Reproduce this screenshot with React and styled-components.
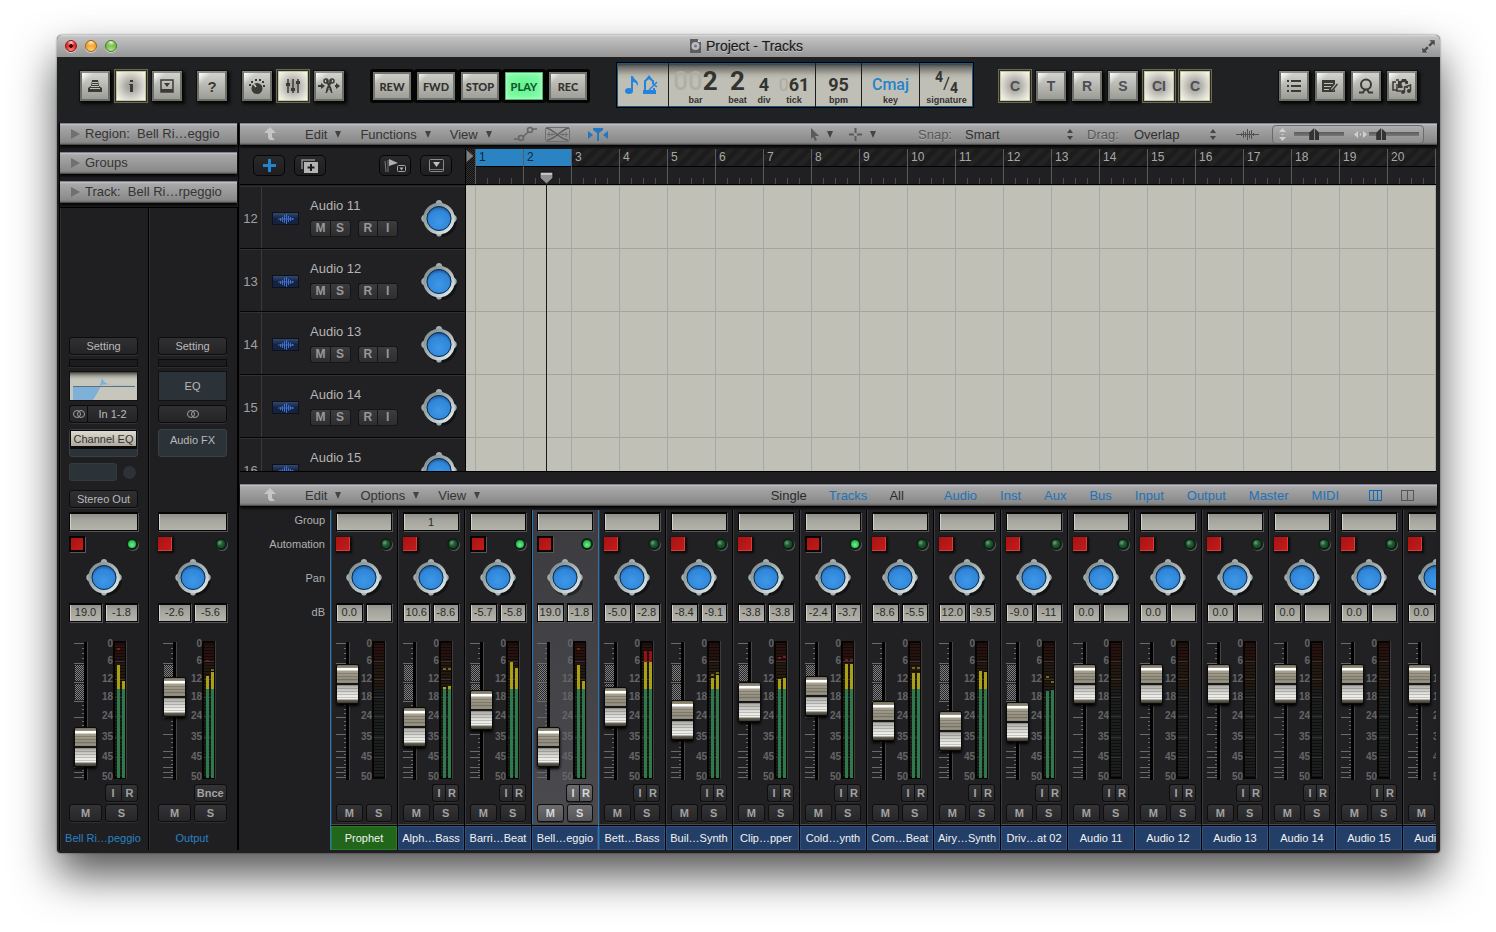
import React, { useState } from 'react';
import styled, { createGlobalStyle, css } from 'styled-components';

const sans = '"Liberation Sans", Arial, sans-serif';

const tracks = [
  { number: 12, name: 'Audio 11' },
  { number: 13, name: 'Audio 12' },
  { number: 14, name: 'Audio 13' },
  { number: 15, name: 'Audio 14' },
  { number: 16, name: 'Audio 15' },
];

// levels and peaks are in meter units, counted down from the top
const bellLevels = { levels: [24, 40], peaks: [7, null] };

const channels = [
  { name: 'Prophet', db: ['0.0', ''], fader: 76, instrument: true },
  { name: 'Alph…Bass', group: '1', db: ['10.6', '-8.6'], fader: 33, levels: [46, 45], peaks: [27, 27] },
  { name: 'Barri…Beat', db: ['-5.7', '-5.8'], fader: 50, auto: true, levels: [21, 27] },
  { name: 'Bell…eggio', db: ['19.0', '-1.8'], fader: 13, auto: true, selected: true, ...bellLevels },
  { name: 'Bett…Bass', db: ['-5.0', '-2.8'], fader: 53, levels: [10, 10] },
  { name: 'Buil…Synth', db: ['-8.4', '-9.1'], fader: 40, levels: [37, 34], peaks: [33, 31] },
  { name: 'Clip…pper', db: ['-3.8', '-3.8'], fader: 58, levels: [38, 37], peaks: [16, 15] },
  { name: 'Cold…ynth', db: ['-2.4', '-3.7'], fader: 64, auto: true, levels: [23, 23], peaks: [18, 18] },
  { name: 'Com…Beat', db: ['-8.6', '-5.5'], fader: 39, levels: [32, 32], peaks: [26, 26] },
  { name: 'Airy…Synth', db: ['12.0', '-9.5'], fader: 29, levels: [30, 31] },
  { name: 'Driv…at 02', db: ['-9.0', '-11'], fader: 38, levels: [50, 49], peaks: [35, 40] },
  { name: 'Audio 11', db: ['0.0', ''], fader: 76 },
  { name: 'Audio 12', db: ['0.0', ''], fader: 76 },
  { name: 'Audio 13', db: ['0.0', ''], fader: 76 },
  { name: 'Audio 14', db: ['0.0', ''], fader: 76 },
  { name: 'Audio 15', db: ['0.0', ''], fader: 76 },
  { name: 'Audio 16', db: ['0.0', ''], fader: 76 },
];

const bellChannel = {
  name: 'Bell Ri…peggio',
  db: ['19.0', '-1.8'],
  fader: 13,
  auto: true,
  ...bellLevels,
};

const outputChannel = {
  name: 'Output',
  db: ['-2.6', '-5.6'],
  fader: 63,
  levels: [35, 31],
  peaks: [19, 28],
  bounce: true,
};

const scale = [0, 6, 12, 18, 24, 35, 45, 50];
const majorTicks = [1, 21, 40, 59, 75, 92, 109, 115, 125, 130, 135];
const minorTicks = [6, 11, 16, 26, 31, 36, 45, 50, 55, 63, 67, 71, 79, 83, 87, 96, 100, 105, 112, 118, 122, 128, 133];
const bars = Array.from({ length: 21 }, (_, i) => i + 1);
const filters = ['Audio', 'Inst', 'Aux', 'Bus', 'Input', 'Output', 'Master', 'MIDI'];

/* ---------- icons ---------- */

const Svg = ({ w, h, children, ...rest }) => (
  <svg width={w} height={h} viewBox={`0 0 ${w} ${h}`} fill='none' aria-hidden='true' {...rest}>
    {children}
  </svg>
);

const LibraryIcon = () => (
  <Svg w={14} h={14}>
    <path d='M4 1h6l1 6 3 2v4H0V9l3-2z' fill='#3b3a33' />
    <path d='M4 3.500h6M4 5.500h6M3 7.500h8M2 9.500h10' stroke='#c0c0b8' />
  </Svg>
);

const InfoIcon = () => (
  <Svg w={6} h={14}>
    <path d='M2 1h3v2H2zM1 5h4v8H2V6H1z' fill='#3b3a33' />
  </Svg>
);

const ToolbarIcon = () => (
  <Svg w={14} h={14}>
    <path d='M1 1h12v12H1z' stroke='#3b3a33' strokeWidth='1.500' />
    <path d='M1 10h12v3H1z' fill='#3b3a33' />
    <path d='M4 4h6L7 8z' fill='#3b3a33' />
  </Svg>
);

const SmartControlsIcon = () => (
  <Svg w={16} h={16}>
    <circle cx='8' cy='10.500' r='5.500' fill='#3b3a33' />
    <path d='M4 5l3 4' stroke='#c8c8c0' strokeWidth='1.500' />
    <path d='M0 6h2v2H0zM2 3h2v2H2zM6 1h2v2H6zM10 1h2v2h-2zM13 3h2v2h-2zM14 7h2v2h-2z' fill='#3b3a33' />
  </Svg>
);

const MixerIcon = () => (
  <Svg w={14} h={16}>
    <path d='M2 1v14M7 1v14M12 1v14' stroke='#3b3a33' strokeWidth='1.500' />
    <path d='M0 5h4v3H0zM5 10h4v3H5zM10 3h4v3h-4z' fill='#3b3a33' />
  </Svg>
);

const ScissorsIcon = () => (
  <Svg w={22} h={16}>
    <path d='M0 8h4M17 8h4' stroke='#3b3a33' strokeWidth='2' />
    <path d='M3 5l4 3-4 3zM18 5l4 3-4 3z' fill='#3b3a33' />
    <path d='M9 2c0 5 4 6 4 11M13 2c0 5-4 6-4 11' stroke='#3b3a33' strokeWidth='2' />
    <circle cx='8' cy='3' r='2' stroke='#3b3a33' strokeWidth='1.500' />
    <circle cx='14' cy='3' r='2' stroke='#3b3a33' strokeWidth='1.500' />
    <path d='M8 15l2-4M14 15l-2-4' stroke='#3b3a33' strokeWidth='1.500' />
  </Svg>
);

const ListIcon = () => (
  <Svg w={14} h={12}>
    <path d='M0 1h2M0 6h2M0 11h2M4 1h10M4 6h10M4 11h10' stroke='#3b3a33' strokeWidth='2' />
  </Svg>
);

const NoteEditIcon = () => (
  <Svg w={16} h={14}>
    <path d='M0 1h13v12H0z' fill='#3b3a33' />
    <path d='M2 4.500h9M2 7.500h7M2 10.500h5' stroke='#c0c0b8' />
    <path d='M15 5l-5 6' stroke='#b8b8b0' strokeWidth='3' />
    <path d='M15.500 5l-5 6-1 1.500' stroke='#3b3a33' strokeWidth='1.500' />
  </Svg>
);

const LoopIcon = () => (
  <Svg w={16} h={16}>
    <circle cx='8' cy='6.500' r='5' stroke='#3b3a33' strokeWidth='2' />
    <path d='M1 14.500h4l2-3M15 14.500h-4l-2-3' stroke='#3b3a33' strokeWidth='2' />
  </Svg>
);

const BrowserIcon = () => (
  <Svg w={20} h={16}>
    <path d='M4 4H1v8h4M4 2h3M5 6v7h4' stroke='#3b3a33' strokeWidth='1.500' />
    <path d='M6 3h3l1-2h4l1 2h1v7H6z' fill='#3b3a33' />
    <circle cx='11.500' cy='6' r='2' fill='#bcbcb4' />
    <path d='M12 14V8l6-1v6' stroke='#b8b8b0' strokeWidth='3' />
    <path d='M12.500 14V9l6-2v6' stroke='#3b3a33' strokeWidth='1.500' />
    <circle cx='11' cy='14' r='2' fill='#3b3a33' />
    <circle cx='17' cy='13' r='2' fill='#3b3a33' />
  </Svg>
);

const LcdNoteIcon = () => (
  <Svg w={13} h={18}>
    <ellipse cx='4' cy='15' rx='4' ry='3' fill='#2284dc' />
    <path d='M6 0h2c0 3 5 4 5 8 0 1-1 2-1 2 0-3-2-4-4-4v9H6z' fill='#2284dc' />
  </Svg>
);

const MetronomeIcon = () => (
  <Svg w={18} h={20}>
    <path d='M3 17V6l4-3 4 3v3M12 13v5' stroke='#2284dc' strokeWidth='2' />
    <path d='M4 4l3-4 3 4zM1 15h13v4H1z' fill='#2284dc' />
    <path d='M7 15l8-8' stroke='#2284dc' strokeWidth='1.500' />
    <path d='M11 9l4 3' stroke='#2284dc' strokeWidth='1.500' />
  </Svg>
);

const DocumentIcon = () => (
  <Svg w={11} h={14}>
    <path d='M0 0h8l3 3v11H0z' fill='#5d5d5d' />
    <circle cx='5.500' cy='7' r='4' fill='#b9bcc2' />
    <circle cx='5.500' cy='7' r='1.500' fill='#77797f' />
    <path d='M8 0v3h3z' fill='#ddd' />
  </Svg>
);

const FullscreenIcon = () => (
  <Svg w={15} h={15}>
    <path d='M8 1h6v6l-2-2-3 3-2-2 3-3zM1 8l2 2 3-3 2 2-3 3 2 2H1z' fill='#4c4c4c' stroke='#b5b5b5' strokeWidth='.5' />
  </Svg>
);

const UpArrowIcon = () => (
  <Svg w={12} h={14}>
    <path d='M6 0l6 6H8v4l3 3H6l-2-2V6H0z' fill='#c6c6c6' />
  </Svg>
);

const CurveIcon = () => (
  <Svg w={24} h={16}>
    <path d='M0 13h4M9 11l5-5M19 3h4' stroke='#666' strokeWidth='1.500' />
    <circle cx='7' cy='12' r='2.500' stroke='#666' strokeWidth='1.500' />
    <circle cx='16' cy='4' r='2.500' stroke='#666' strokeWidth='1.500' />
  </Svg>
);

const FlexIcon = () => (
  <Svg w={25} h={15}>
    <rect x='.5' y='.5' width='24' height='14' rx='2' stroke='#6d6d6d' />
    <path d='M1 1c8 1 14 12 22 12M24 1C16 2 10 13 2 13' stroke='#5e5e5e' strokeWidth='1.500' />
    <path d='M2 7.500h8M15 7.500h8M4 5v5M21 5v5M7 6v3M18 6v3' stroke='#6d6d6d' />
  </Svg>
);

const CatchIcon = () => (
  <Svg w={20} h={14}>
    <path d='M0 4l5 4-5 4zM20 4l-5 4 5 4z' fill='#2277bf' />
    <path d='M5 1h10v2l-4 3v8H9V6L5 3z' fill='#2277bf' />
  </Svg>
);

const PointerIcon = () => (
  <Svg w={9} h={13}>
    <path d='M1 0l8 8H5l2 4-2 1-2-4-2 2z' fill='#5a5a5a' />
  </Svg>
);

const CrosshairIcon = () => (
  <Svg w={13} h={13}>
    <path d='M6.500 0v5M6.500 8v5M0 6.500h5M8 6.500h5' stroke='#5a5a5a' strokeWidth='2' />
  </Svg>
);

const WaveIcon = () => (
  <Svg w={23} h={11}>
    <path d='M0 5.500h23M5.500 4v3M7.500 2v7M9.500 3v5M11.500 0v11M13.500 2v7M15.500 1v9M17.500 4v3' stroke='#505050' />
  </Svg>
);

const StepperIcon = () => (
  <Svg w={6} h={11}>
    <path d='M3 0l3 4H0zM3 11l3-4H0z' fill='#454545' />
  </Svg>
);

const VerticalZoomIcon = () => (
  <Svg w={7} h={13}>
    <path d='M3.500 0L7 4H0zM3.500 13L7 9H0zM2.500 6h2v1h-2z' fill='#d0d0d0' />
  </Svg>
);

const HorizontalZoomIcon = () => (
  <Svg w={13} h={7}>
    <path d='M0 3.500L4 0v7zM13 3.500L9 0v7zM6 2.500h1v2H6z' fill='#d0d0d0' />
  </Svg>
);

const PlusIcon = () => (
  <Svg w={13} h={13}>
    <path d='M6.500 0v13M0 6.500h13' stroke='#2284cc' strokeWidth='3' />
  </Svg>
);

const DuplicateIcon = () => (
  <Svg w={18} h={14}>
    <path d='M1 10V1h13' stroke='#8e8e8e' strokeWidth='1.500' />
    <rect x='3' y='3' width='14' height='11' fill='#b4b4b4' />
    <path d='M10 5v7M6.500 8.500h7' stroke='#1c1c1e' strokeWidth='2' />
  </Svg>
);

const FlagIcon = () => (
  <Svg w={22} h={14}>
    <path d='M1 2l1 11M4 1v12' stroke='#777' />
    <path d='M5 0l9 4-9 3z' fill='#b0b0b0' />
    <rect x='13.500' y='6.500' width='8' height='6' rx='1' stroke='#a5a5a5' />
    <path d='M15.500 8.500h4l-2 3z' fill='#b0b0b0' />
  </Svg>
);

const HeaderMenuIcon = () => (
  <Svg w={15} h={13}>
    <rect x='.5' y='.5' width='14' height='12' rx='1' stroke='#8a8a8a' />
    <path d='M1 10.500h13' stroke='#777' />
    <path d='M4 3h7l-3.500 5z' fill='#c0c0c0' />
  </Svg>
);

const StereoIcon = () => (
  <Svg w={12} h={8}>
    <circle cx='4' cy='4' r='3.500' stroke='#a0a0a0' />
    <circle cx='8' cy='4' r='3.500' stroke='#a0a0a0' />
  </Svg>
);

const ColumnsIcon = ({ count, color }) => (
  <Svg w={13} h={11}>
    <rect x='.5' y='.5' width='12' height='10' stroke={color} />
    {count === 3 ? <path d='M4.500 0v11M8.500 0v11' stroke={color} /> : <path d='M6.500 0v11' stroke={color} />}
  </Svg>
);

const RegionWave = () => (
  <Svg w={16} h={10}>
    <path d='M0 5h16M2.500 4v3M4.500 3v5M6.500 1v8M8.500 0v10M10.500 2v6M12.500 3v4M14.500 4v2' stroke='#3d6fd0' />
  </Svg>
);

const EqCurve = () => (
  <Svg w={67} h={28}>
    <defs>
      <linearGradient id='eqShade' x1='0' y1='0' x2='0' y2='1'>
        <stop offset='0' stopColor='#3a3a36' />
        <stop offset='.3' stopColor='#c6c6bc' stopOpacity='0' />
      </linearGradient>
    </defs>
    <rect width='67' height='28' fill='#c6c6bc' />
    <path d='M3 15v13h20c5-7 6-11 8-14s6-1 34 0c-26 0-31-1-33-9-1 6-2 9-3 10z' fill='#7fb0d8' />
    <path d='M3 14.500h62' stroke='#5e6f80' />
    <rect width='67' height='28' fill='url(#eqShade)' />
  </Svg>
);

const PanKnob = ({ label }) => (
  <KnobButton type='button' aria-label={label}>
    <Svg w={36} h={37}>
      <defs>
        <linearGradient id='knobRing' x1='0' y1='0' x2='1' y2='1'>
          <stop offset='0' stopColor='#7d8889' />
          <stop offset='.5' stopColor='#a9b4b5' />
          <stop offset='1' stopColor='#e6f0f1' />
        </linearGradient>
        <radialGradient id='knobFace' cx='.5' cy='.62' r='.62'>
          <stop offset='0' stopColor='#3e97e8' />
          <stop offset='.65' stopColor='#3086d8' />
          <stop offset='1' stopColor='#123c74' />
        </radialGradient>
      </defs>
      <circle cx='20' cy='21' r='16' fill='#000' opacity='.4' />
      <g fill='#a3afb0'>
        <path d='M14 5l1.500-4q2.500-2 5 0L22 5zM14 32h8l-2 4q-2 1-4 0z' />
        <path d='M5 13v11l-4-3q-1.500-2.500 0-5zM31 13v11l4-3q1.500-2.500 0-5z' />
      </g>
      <circle cx='18' cy='18.500' r='14' fill='url(#knobFace)' stroke='url(#knobRing)' strokeWidth='3.500' />
      <circle cx='18' cy='18.500' r='12' stroke='#102a4a' />
    </Svg>
  </KnobButton>
);

const FaderTicks = () => (
  <TicksSvg w={11} h={138}>
    <defs>
      <pattern id='dither' width='2' height='2' patternUnits='userSpaceOnUse'>
        <path d='M0 0h1v1H0zM1 1h1v1H1z' fill='#808080' />
      </pattern>
    </defs>
    {majorTicks.map((y) => (
      <path key={y} d={`M0 ${y + 0.5}h10`} stroke='#6b6b6b' />
    ))}
    {minorTicks.map((y) => (
      <path key={y} d={`M8 ${y + 0.5}h2`} stroke='#6b6b6b' />
    ))}
    <path d='M1 23h9v16H1zM1 42h9v16H1z' fill='#232325' />
    <path d='M1 23h9v16H1zM1 42h9v16H1z' fill='url(#dither)' />
  </TicksSvg>
);

const Meter = ({ levels = [], peaks = [] }) => (
  <Svg w={14} h={138}>
    <defs>
      <pattern id='segments' width='14' height='3' patternUnits='userSpaceOnUse'>
        <path d='M0 0h14v1H0z' fill='#000' opacity='.5' />
      </pattern>
    </defs>
    <rect width='14' height='138' fill='#050505' />
    <path d='M13.500 0v138' stroke='#3c3c3d' />
    <rect x='2' y='2' width='10' height='19' fill='#27120f' />
    <rect x='2' y='21' width='10' height='27' fill='#241a12' />
    <rect x='2' y='48' width='10' height='88' fill='#1c1e1e' />
    <rect x='2' y='2' width='10' height='134' fill='url(#segments)' />
    <path d='M2 20.500h10M2 38.500h10M2 56.500h10M2 75.500h10M2 96.500h10M2 116.500h10' stroke='#343434' />
    {levels.map((top, i) => {
      const x = i ? 9 : 4;
      return (
        <g key={i}>
          {top < 21 && <rect x={x} y={top} width='3' height={21 - top} fill='#92141a' />}
          {top < 48 && <rect x={x} y={Math.max(top, 21)} width='3' height={48 - Math.max(top, 21)} fill='#a9a016' />}
          <rect x={x} y={Math.max(top, 48)} width='3' height={137 - Math.max(top, 48)} fill='#30794b' />
        </g>
      );
    })}
    {peaks.map((y, i) =>
      y ? <rect key={i} x={i ? 9 : 4} y={y} width='3' height='2' fill={y < 21 ? '#7a1a1c' : '#6f6a14'} /> : null
    )}
  </Svg>
);

/* ---------- channel strip ---------- */

const ChannelStrip = ({ channel, wide }) => {
  const [level, setLevel] = useState(channel.fader);
  const { name, group, db, auto, selected, levels, peaks, instrument, bounce } = channel;

  return (
    <Strip $wide={wide} $selected={selected}>
      <StripBody $wide={wide}>
        <Slot type='button' aria-label={`${name} group`}>
          {group}
        </Slot>
        <AutomationRow>
          <AutomationButton type='button' aria-label={`${name} automation`} $on={auto} />
          <Led $on={auto} />
        </AutomationRow>
        <PanKnob label={`${name} pan`} />
        <ValueRow>
          <Slot as='output'>{db[0]}</Slot>
          <Slot as='output'>{db[1]}</Slot>
        </ValueRow>
        <FaderRow $wide={wide}>
          <FaderBox>
            <FaderTicks />
            <Fader
              type='range'
              aria-label={`${name} volume`}
              min='0'
              max='98'
              value={level}
              onChange={(e) => setLevel(e.target.value)}
            />
          </FaderBox>
          <Scale $wide={wide}>
            {scale.map((mark) => (
              <span key={mark}>{mark}</span>
            ))}
          </Scale>
          <MeterBox>
            <Meter levels={levels} peaks={peaks} />
          </MeterBox>
        </FaderRow>
        <InputRow>
          {bounce && (
            <StripButton type='button' $lit={selected}>
              Bnce
            </StripButton>
          )}
          {!bounce && !instrument && (
            <SplitPair>
              <StripButton type='button' $lit={selected}>
                I
              </StripButton>
              <StripButton type='button' $lit={selected}>
                R
              </StripButton>
            </SplitPair>
          )}
        </InputRow>
        <ButtonRow>
          <StripButton type='button' $lit={selected}>
            M
          </StripButton>
          <StripButton type='button' $lit={selected}>
            S
          </StripButton>
        </ButtonRow>
      </StripBody>
      <StripName $wide={wide} $instrument={instrument}>
        {name}
      </StripName>
    </Strip>
  );
};

const Menu = ({ children }) => (
  <MenuButton type='button'>
    {children}
    <Caret />
  </MenuButton>
);

const App = () => (
  <Page>
    <GlobalStyle />
    <Window>
      <TitleBar>
        <Lights>
          <Light type='button' aria-label='Close' $color='#e0322c' $edge='#8a1512' $dot />
          <Light type='button' aria-label='Minimize' $color='#f4a92f' $edge='#98601a' />
          <Light type='button' aria-label='Zoom' $color='#7cc24a' $edge='#3f7a26' />
        </Lights>
        <Title>
          <DocumentIcon />
          Project - Tracks
        </Title>
        <FullscreenIcon />
      </TitleBar>

      <Toolbar>
        <ToolGroups>
          <ToolGroup>
            <ToolButton type='button' aria-label='Library'>
              <LibraryIcon />
            </ToolButton>
            <ToolButton type='button' aria-label='Inspector' $active>
              <InfoIcon />
            </ToolButton>
            <ToolButton type='button' aria-label='Toolbar'>
              <ToolbarIcon />
            </ToolButton>
          </ToolGroup>
          <ToolButton type='button'>?</ToolButton>
          <ToolGroup>
            <ToolButton type='button' aria-label='Smart controls'>
              <SmartControlsIcon />
            </ToolButton>
            <ToolButton type='button' aria-label='Mixer' $active>
              <MixerIcon />
            </ToolButton>
            <ToolButton type='button' aria-label='Editors'>
              <ScissorsIcon />
            </ToolButton>
          </ToolGroup>
        </ToolGroups>

        <Transport>
          <TransportButton type='button'>REW</TransportButton>
          <TransportButton type='button'>FWD</TransportButton>
          <TransportButton type='button'>STOP</TransportButton>
          <TransportButton type='button' $playing>
            PLAY
          </TransportButton>
          <TransportButton type='button'>REC</TransportButton>
        </Transport>

        <Lcd>
          <LcdIcons>
            <LcdNoteIcon />
            <MetronomeIcon />
          </LcdIcons>
          <LcdPosition>
            <LcdField>
              <LcdValue $large>
                <Ghost>00</Ghost>2
              </LcdValue>
              <LcdLabel>bar</LcdLabel>
            </LcdField>
            <LcdField>
              <LcdValue $large>2</LcdValue>
              <LcdLabel>beat</LcdLabel>
            </LcdField>
            <LcdField>
              <LcdValue>4</LcdValue>
              <LcdLabel>div</LcdLabel>
            </LcdField>
            <LcdField>
              <LcdValue>
                <Ghost>0</Ghost>61
              </LcdValue>
              <LcdLabel>tick</LcdLabel>
            </LcdField>
          </LcdPosition>
          <LcdCell $width={46}>
            <LcdValue>95</LcdValue>
            <LcdLabel>bpm</LcdLabel>
          </LcdCell>
          <LcdCell $width={58}>
            <LcdKey>Cmaj</LcdKey>
            <LcdLabel>key</LcdLabel>
          </LcdCell>
          <LcdCell $width={53}>
            <Signature>
              <sup>4</sup>/<sub>4</sub>
            </Signature>
            <LcdLabel>signature</LcdLabel>
          </LcdCell>
        </Lcd>

        <ToolGroup>
          {['C', 'T', 'R', 'S', 'CI', 'C'].map((text, i) => (
            <ToolButton key={i} type='button' $letter $active={[0, 4, 5].includes(i)}>
              {text}
            </ToolButton>
          ))}
        </ToolGroup>

        <ToolGroup $end>
          <ToolButton type='button' aria-label='Lists'>
            <ListIcon />
          </ToolButton>
          <ToolButton type='button' aria-label='Note pads'>
            <NoteEditIcon />
          </ToolButton>
          <ToolButton type='button' aria-label='Loops'>
            <LoopIcon />
          </ToolButton>
          <ToolButton type='button' aria-label='Browsers'>
            <BrowserIcon />
          </ToolButton>
        </ToolGroup>
      </Toolbar>

      <Body>
        <Inspector>
          <InspectorHeader type='button'>
            <Triangle />
            Region:&nbsp;&nbsp;Bell Ri…eggio
          </InspectorHeader>
          <InspectorHeader type='button'>
            <Triangle />
            Groups
          </InspectorHeader>
          <InspectorHeader type='button'>
            <Triangle />
            Track:&nbsp;&nbsp;Bell Ri…rpeggio
          </InspectorHeader>
          <InspectorStrips>
            <InspectorColumn>
              <Inserts>
                <InsertButton type='button'>Setting</InsertButton>
                <ThinSlot />
                <EqButton type='button' aria-label='Channel EQ curve'>
                  <EqCurve />
                </EqButton>
                <SplitInsert>
                  <InsertButton type='button' aria-label='Stereo input'>
                    <StereoIcon />
                  </InsertButton>
                  <InsertButton type='button'>In 1-2</InsertButton>
                </SplitInsert>
                <PluginBay>
                  <PluginButton type='button'>Channel EQ</PluginButton>
                </PluginBay>
                <SendRow>
                  <SendSlot />
                  <SendKnob />
                </SendRow>
                <InsertButton type='button'>Stereo Out</InsertButton>
              </Inserts>
              <ChannelStrip channel={bellChannel} wide />
            </InspectorColumn>
            <InspectorColumn>
              <Inserts>
                <InsertButton type='button'>Setting</InsertButton>
                <ThinSlot />
                <EqButton type='button'>EQ</EqButton>
                <InsertButton type='button' aria-label='Stereo format'>
                  <StereoIcon />
                </InsertButton>
                <PluginBay>Audio FX</PluginBay>
              </Inserts>
              <ChannelStrip channel={outputChannel} wide />
            </InspectorColumn>
          </InspectorStrips>
        </Inspector>

        <Main>
          <MenuBar>
            <UpArrowIcon />
            <Menus>
              <Menu>Edit</Menu>
              <Menu>Functions</Menu>
              <Menu>View</Menu>
            </Menus>
            <ModeIcons>
              <CurveIcon />
              <FlexIcon />
              <CatchIcon />
            </ModeIcons>
            <ToolPickers>
              <MenuButton type='button' aria-label='Left-click tool'>
                <PointerIcon />
                <Caret />
              </MenuButton>
              <MenuButton type='button' aria-label='Command-click tool'>
                <CrosshairIcon />
                <Caret />
              </MenuButton>
            </ToolPickers>
            <PopupLabel>
              <span>Snap:</span>
              <Popup $width={102}>
                <option>Smart</option>
              </Popup>
              <StepperIcon />
            </PopupLabel>
            <PopupLabel>
              <span>Drag:</span>
              <Popup $width={76}>
                <option>Overlap</option>
              </Popup>
              <StepperIcon />
            </PopupLabel>
            <WaveIcon />
            <ZoomBox>
              <ZoomPart>
                <VerticalZoomIcon />
                <ZoomSlider type='range' aria-label='Vertical zoom' defaultValue='38' />
              </ZoomPart>
              <ZoomPart>
                <HorizontalZoomIcon />
                <ZoomSlider type='range' aria-label='Horizontal zoom' defaultValue='18' />
              </ZoomPart>
            </ZoomBox>
          </MenuBar>

          <Arrange>
            <TrackTools>
              <RoundButton type='button' aria-label='Add track'>
                <PlusIcon />
              </RoundButton>
              <RoundButton type='button' aria-label='Duplicate track'>
                <DuplicateIcon />
              </RoundButton>
              <RoundButton type='button' aria-label='Global tracks' $end>
                <FlagIcon />
              </RoundButton>
              <RoundButton type='button' aria-label='Header options'>
                <HeaderMenuIcon />
              </RoundButton>
            </TrackTools>
            <Ruler>
              <RulerStart>
                <Svg w={8} h={14}>
                  <path d='M0 0l8 7-8 7z' fill='#7d7d7d' stroke='#222' />
                </Svg>
              </RulerStart>
              {bars.map((bar) => (
                <RulerBar key={bar} $cycle={bar < 3}>
                  <span>{bar < 21 ? bar : ''}</span>
                </RulerBar>
              ))}
            </Ruler>
            <TrackList>
              {tracks.map(({ number, name }) => (
                <TrackRow key={number}>
                  <TrackNumber>{number}</TrackNumber>
                  <TrackIcon>
                    <RegionWave />
                  </TrackIcon>
                  <TrackInfo>
                    <TrackName>{name}</TrackName>
                    <TrackButtons>
                      <SplitPair>
                        <TrackButton type='button'>M</TrackButton>
                        <TrackButton type='button'>S</TrackButton>
                      </SplitPair>
                      <SplitPair>
                        <TrackButton type='button'>R</TrackButton>
                        <TrackButton type='button'>I</TrackButton>
                      </SplitPair>
                    </TrackButtons>
                  </TrackInfo>
                  <PanKnob label={`${name} pan`} />
                </TrackRow>
              ))}
            </TrackList>
            <Canvas />
            <Playhead>
              <Svg w={15} h={14}>
                <path d='M1 1h13v6l-6.500 6L1 7z' fill='#8f8f8f' stroke='#111' />
                <path d='M2 2h11v2H2z' fill='#c4c4c4' />
              </Svg>
            </Playhead>
          </Arrange>

          <MenuBar>
            <UpArrowIcon />
            <Menus>
              <Menu>Edit</Menu>
              <Menu>Options</Menu>
              <Menu>View</Menu>
            </Menus>
            <Scopes>
              <ScopeButton type='button'>Single</ScopeButton>
              <ScopeButton type='button' $blue>
                Tracks
              </ScopeButton>
              <ScopeButton type='button'>All</ScopeButton>
            </Scopes>
            <Filters>
              {filters.map((filter) => (
                <ScopeButton key={filter} type='button' $blue>
                  {filter}
                </ScopeButton>
              ))}
            </Filters>
            <WidthButtons>
              <ScopeButton type='button' aria-label='Narrow strips'>
                <ColumnsIcon count={3} color='#0f6cbb' />
              </ScopeButton>
              <ScopeButton type='button' aria-label='Wide strips'>
                <ColumnsIcon count={2} color='#555' />
              </ScopeButton>
            </WidthButtons>
          </MenuBar>

          <Mixer>
            <MixerLabels>
              <span>Group</span>
              <span>Automation</span>
              <span>Pan</span>
              <span>dB</span>
            </MixerLabels>
            {channels.map((channel, i) => (
              <ChannelStrip key={i} channel={channel} />
            ))}
          </Mixer>
        </Main>
      </Body>
    </Window>
  </Page>
);

export default App;

/* ---------- styles ---------- */

const GlobalStyle = createGlobalStyle`
  *, *::before, *::after {
    box-sizing: border-box;
  }
  body {
    margin: 0;
    background: #fff;
    font-family: ${sans};
    overflow: hidden;
  }
  button, select, input {
    font: inherit;
    color: inherit;
    margin: 0;
    padding: 0;
    border: 0;
    background: none;
  }
  svg {
    display: block;
    flex: none;
  }
`;

const row = css`
  display: flex;
  align-items: center;
`;

const Page = styled.div`
  height: 100vh;
  padding: 35px 56px 79px 57px;
`;

const Window = styled.div`
  display: flex;
  flex-direction: column;
  height: 100%;
  min-height: 700px;
  background: #1f1f21;
  border-radius: 5px 5px 4px 4px;
  box-shadow: 0 22px 44px rgba(0, 0, 0, 0.68), 0 0 2px rgba(0, 0, 0, 0.6);
  overflow: hidden;
`;

const TitleBar = styled.header`
  ${row}
  height: 22px;
  padding: 0 4px 0 8px;
  background: linear-gradient(#dcdcdc, #c2c2c2 2px, #969696);
`;

const Lights = styled.div`
  ${row}
  gap: 8px;
`;

const Light = styled.button`
  width: 12px;
  height: 12px;
  border-radius: 50%;
  border: 1px solid ${({ $edge }) => $edge};
  background: ${({ $dot }) => ($dot ? 'radial-gradient(circle at 5px 5px, #4a0606 2px, transparent 2px),' : '')}
    radial-gradient(circle at 50% 10%, rgba(255, 255, 255, 0.8), transparent 40%),
    radial-gradient(circle at 50% 100%, rgba(255, 255, 255, 0.5), transparent 50%),
    ${({ $color }) => $color};
  box-shadow: 0 1px 0 rgba(255, 255, 255, 0.5);
`;

const Title = styled.h1`
  ${row}
  flex: 1;
  justify-content: center;
  gap: 5px;
  margin: 0;
  padding-right: 45px;
  font-size: 14px;
  font-weight: 400;
  color: #1b1b1b;
  text-shadow: 0 1px 0 rgba(255, 255, 255, 0.4), 0 0 1px rgba(0, 0, 0, 0.4);
`;

const Toolbar = styled.nav`
  display: flex;
  align-items: flex-start;
  gap: 26px;
  height: 66px;
  padding: 5px 23px 0 23px;
  background: #202123;
`;

const ToolGroup = styled.div`
  display: flex;
  gap: 6px;
  padding-top: 9px;
  ${({ $end }) => $end && 'margin-left: auto;'}
`;

const ToolButton = styled.button`
  display: grid;
  place-items: center;
  width: 30px;
  height: 30px;
  flex: none;
  border: 2px solid #6e6e69;
  border-top-color: #8b8b86;
  background: linear-gradient(135deg, #fff, transparent 25%), linear-gradient(#d2d2ce, #9c9c97);
  box-shadow: 2px 2px 3px 1px #060606, 0 0 0 1px #121212;
  font-size: ${({ $letter }) => ($letter ? '14px' : '15px')};
  font-weight: 700;
  color: ${({ $letter }) => ($letter ? '#4e4e54' : '#3b3a33')};
  ${({ $active }) =>
    $active &&
    css`
      border: 1px solid #c4c4a4;
      background: radial-gradient(#a6a6a0 20%, #d4d4cc 60%, #fbfbe9);
      box-shadow: 0 0 0 1px #2c2c24, 0 0 0 2px #6a6a52;
    `}
`;

const ToolGroups = styled.div`
  display: flex;
  gap: 15px;

  > ${ToolButton} {
    margin-top: 9px;
  }
`;

const Transport = styled.div`
  display: flex;
  padding-top: 7px;
`;

const TransportButton = styled.button`
  width: 44px;
  height: 34px;
  border: 3px solid #050505;
  border-radius: 3px;
  background: linear-gradient(135deg, #fff, transparent 22%), linear-gradient(#cfcfca, #9c9c96);
  background-clip: padding-box;
  background-color: #050505;
  box-shadow: inset 0 0 0 2px #73736e;
  font-family: Lato, sans-serif;
  font-size: 11px;
  font-weight: 900;
  color: #33332f;
  ${({ $playing }) =>
    $playing &&
    css`
      background: radial-gradient(#5ff48f, #8dfdae);
      background-clip: padding-box;
      box-shadow: inset 0 0 0 1px #4db36d, inset 0 0 5px #e2ffe9;
      color: #14582b;
    `}
`;

const Lcd = styled.div`
  display: flex;
  width: 358px;
  height: 46px;
  border: 1px solid #000;
  box-shadow: inset 0 0 0 1px #1d5785;
  background: linear-gradient(#26333c, #6f6f6a 4px, #b5b4ab 12px, #c0bfb6 16px);
  color: #33332f;
`;

const LcdIcons = styled.div`
  ${row}
  justify-content: center;
  gap: 4px;
  width: 52px;
  border-right: 1px solid #1c1c1c;
`;

const LcdCell = styled.div`
  display: flex;
  flex-direction: column;
  align-items: center;
  justify-content: flex-end;
  width: ${({ $width }) => $width}px;
  padding-bottom: 2px;
  border-right: 1px solid #1c1c1c;

  &:last-child {
    border-right: 0;
  }
`;

const LcdPosition = styled.div`
  flex: 1;
  display: grid;
  grid-template-columns: 53px 31px 22px 38px;
  border-right: 1px solid #1c1c1c;
`;

const LcdField = styled.div`
  display: flex;
  flex-direction: column;
  align-items: center;
  justify-content: flex-end;
  padding-bottom: 2px;
`;

const LcdValue = styled.span`
  font-family: Roboto, sans-serif;
  font-size: ${({ $large }) => ($large ? '26px' : '18px')};
  line-height: ${({ $large }) => ($large ? '27px' : '21px')};
  font-weight: 700;
`;

const LcdKey = styled.span`
  font-family: Roboto, sans-serif;
  font-size: 16px;
  line-height: 20px;
  font-weight: 500;
  color: #2284cc;
`;

const Ghost = styled.span`
  color: #afaea5;
  font-weight: 500;
`;

const LcdLabel = styled.span`
  font-size: 9px;
  line-height: 10px;
  font-weight: 700;
`;

const Signature = styled.span`
  font-family: Roboto, sans-serif;
  font-size: 17px;
  line-height: 24px;

  sup,
  sub {
    font-size: 14px;
    line-height: 0;
    font-weight: 700;
  }
`;

const Body = styled.div`
  flex: 1;
  min-height: 0;
  display: flex;
  gap: 2px;
  padding: 0 3px 3px;
`;

const barStyle = css`
  border-top: 1px solid #84829c;
  border-bottom: 1px solid #4c4c4c;
  background: linear-gradient(#c4c4c4, #a8a8a8 2px, #898989 18px, #6c6c6c);
  box-shadow: 0 2px 3px #000;
  font-size: 13px;
  color: #343434;
`;

const Inspector = styled.aside`
  display: flex;
  flex-direction: column;
  gap: 7px;
  width: 178px;
  flex: none;
  box-shadow: 1px 0 0 #000, -1px 0 0 #000;
`;

const InspectorHeader = styled.button`
  ${barStyle}
  ${row}
  gap: 5px;
  height: 22px;
  flex: none;
  padding: 0 0 1px 11px;
  margin-right: 1px;
  white-space: nowrap;
`;

const Triangle = styled.span`
  border: solid transparent;
  border-width: 5px 0 5px 9px;
  border-left-color: #707070;
`;

const InspectorStrips = styled.div`
  flex: 1;
  min-height: 0;
  display: grid;
  grid-template-columns: 1fr 1fr;
  margin-top: -3px;
  border-top: 1px solid #000;
`;

const InspectorColumn = styled.div`
  display: flex;
  flex-direction: column;
  justify-content: flex-end;
  border-right: 1px solid #000;
  box-shadow: inset 1px 0 0 #303032;
`;

const Inserts = styled.div`
  display: flex;
  flex-direction: column;
  gap: 4px;
  height: 173px;
  padding: 0 10px 0 9px;
  font-size: 11px;
  color: #b9b9b9;
`;

const InsertButton = styled.button`
  display: grid;
  place-items: center;
  height: 18px;
  flex: none;
  border: 1px solid #0c0c0d;
  border-radius: 3px;
  background: linear-gradient(#303032, #242426);
  box-shadow: 0 1px 0 #313133;
`;

const SplitInsert = styled.div`
  display: grid;
  grid-template-columns: 18px 1fr;

  ${InsertButton}:first-child {
    border-radius: 3px 0 0 3px;
    border-right: 0;
  }
  ${InsertButton}:last-child {
    border-radius: 0 3px 3px 0;
  }
`;

const ThinSlot = styled.div`
  height: 8px;
  flex: none;
  border: 1px solid #0c0c0d;
  background: #1c1c1e;
  box-shadow: 0 1px 0 #2e2e30;
`;

const EqButton = styled.button`
  display: grid;
  place-items: center;
  height: 30px;
  flex: none;
  overflow: hidden;
  border: 1px solid #101113;
  background: #2c3338;
`;

const PluginBay = styled.div`
  height: 28px;
  flex: none;
  margin-top: 2px;
  border: 1px solid #394046;
  border-radius: 3px;
  background: #2c3338;
  line-height: 20px;
  text-align: center;
`;

const PluginButton = styled.button`
  display: block;
  width: 100%;
  height: 17px;
  border: 1px solid #0a0a0a;
  background: linear-gradient(#dedad0, #aeaa9e);
  box-shadow: 0 2px 0 #0c0c0c;
  line-height: 14px;
  color: #33322e;
`;

const SendRow = styled.div`
  ${row}
  gap: 6px;
  margin: 2px 0 5px;
`;

const SendSlot = styled.div`
  width: 48px;
  height: 18px;
  border: 1px solid #343b40;
  border-radius: 3px;
  background: #2c3338;
`;

const SendKnob = styled.div`
  width: 13px;
  height: 13px;
  border-radius: 50%;
  background: #2c3338;
`;

const Strip = styled.section`
  display: flex;
  flex-direction: column;
  flex: none;
  width: ${({ $wide }) => ($wide ? 'auto' : '67px')};
  ${({ $wide, $selected }) =>
    !$wide &&
    css`
      border-right: 1px solid ${$selected ? '#2477b8' : '#000'};
      background: ${$selected ? 'linear-gradient(#3c3c40, #4b4b50)' : '#212123'};
      box-shadow: inset 1px 0 0 ${$selected ? '#2477b8' : '#39393b'};
    `}
`;

const StripBody = styled.div`
  display: flex;
  flex-direction: column;
  align-items: stretch;
  padding: ${({ $wide }) => ($wide ? '2px 10px 4px 9px' : '2px 5px 4px')};
`;

const Slot = styled.button`
  display: block;
  height: 19px;
  width: 100%;
  flex: 1;
  min-width: 0;
  border: solid #050505;
  border-width: 2px 1px 1px 1px;
  background: linear-gradient(#8f8f8b, #a3a39c 5px, #b4b4ac);
  box-shadow: 1px 1px 0 #555557, inset 1px 0 0 #d2d2ca;
  font-size: 11px;
  line-height: 15px;
  text-align: center;
  color: #2b2b28;

  ${StripBody} > & {
    flex: none;
  }
`;

const AutomationRow = styled.div`
  ${row}
  justify-content: space-between;
  height: 16px;
  margin: 5px 0 7px;
`;

const AutomationButton = styled.button`
  width: ${({ $on }) => ($on ? '16px' : '14px')};
  height: ${({ $on }) => ($on ? '16px' : '14px')};
  border: ${({ $on }) => ($on ? '2px solid #080202' : 'solid #cf3f3c')};
  border-width: ${({ $on }) => ($on ? '2px' : '0 1px 1px 0')};
  background: linear-gradient(135deg, #a81313, #c41b1b);
  box-shadow: ${({ $on }) => ($on ? '1px 1px 0 #58585a' : '1px 1px 2px 1px #080808')};
`;

const Led = styled.span`
  width: 12px;
  height: 12px;
  border: 2px solid #0e2214;
  border-radius: 50%;
  background: ${({ $on }) =>
    $on
      ? 'radial-gradient(circle at 50% 60%, #6ff590, #2fb852 60%, #15602a)'
      : 'radial-gradient(circle at 35% 35%, #6fa37d, #1d5a30 40%, #123d20)'};
  box-shadow: 1px 1px 0 #5a5a5c;
`;

const KnobButton = styled.button`
  align-self: center;
  width: 36px;
  height: 36px;
`;

const ValueRow = styled.div`
  display: flex;
  gap: 3px;
  margin-top: 8px;
`;

const FaderRow = styled.div`
  display: flex;
  height: 146px;
  margin-top: 16px;
  padding-left: ${({ $wide }) => ($wide ? '5px' : '0')};
`;

const FaderBox = styled.div`
  display: grid;
  width: 23px;
  height: 138px;
  margin-top: 4px;

  > * {
    grid-area: 1 / 1;
  }
`;

const TicksSvg = styled(Svg)`
  justify-self: start;
`;

const Fader = styled.input`
  appearance: none;
  writing-mode: vertical-lr;
  direction: rtl;
  width: 23px;
  height: 138px;
  background: linear-gradient(90deg, #000 3px, #454546 3px) center / 4px 100% no-repeat;

  &::-webkit-slider-runnable-track {
    width: 23px;
    height: 138px;
  }
  &::-webkit-slider-thumb {
    appearance: none;
    width: 23px;
    height: 40px;
    border: 1px solid #0b0b0a;
    border-radius: 2px;
    background: repeating-linear-gradient(transparent 0 2px, rgba(0, 0, 0, 0.18) 2px 3px) 0 6px / 100% 28px no-repeat,
      linear-gradient(
        #75705f,
        #99937f 3px,
        #fff 3px,
        #fff 5px,
        #a5a08f 6px,
        #8d8878 16px,
        #b5b1a4 18px,
        #171717 18px,
        #171717 20px,
        #aaa9a3 20px,
        #e8e8e5 30px,
        #f3f3f0 34px,
        #6d695c 35px,
        #3b382f
      );
    box-shadow: 0 2px 3px #000;
  }
`;

const Scale = styled.div`
  display: grid;
  grid-template-rows: 17px 18px 18px 19px 21px 20px 20px 12px;
  align-content: start;
  width: ${({ $wide }) => ($wide ? '16px' : '13px')};
  font-size: 10px;
  font-weight: 700;
  line-height: 12px;
  text-align: right;
  color: #656567;
`;

const MeterBox = styled.div`
  padding-top: 3px;
`;

const litButton = css`
  background: linear-gradient(#6c6c6f, #565659);
  color: #d8d8d8;
`;

const StripButton = styled.button`
  flex: 1;
  height: 18px;
  border: 1px solid #0e0e0f;
  border-radius: 3px;
  background: linear-gradient(#343436, #262628);
  box-shadow: 0 1px 0 #2f2f31;
  font-size: 11px;
  font-weight: 700;
  line-height: 16px;
  color: #a2a2a2;
  ${({ $lit }) => $lit && litButton}
`;

const SplitPair = styled.div`
  display: flex;
  flex: 1;

  > :first-child {
    border-radius: 3px 0 0 3px;
    border-right: 0;
  }
  > :last-child {
    border-radius: 0 3px 3px 0;
  }
`;

const InputRow = styled.div`
  display: flex;
  width: 50%;
  height: 18px;
  padding-left: 1px;
  margin: 0 0 2px auto;
`;

const ButtonRow = styled.div`
  display: flex;
  gap: 3px;
`;

const StripName = styled.div`
  height: 24px;
  font-size: 11px;
  line-height: 22px;
  text-align: center;
  white-space: nowrap;
  ${({ $wide, $instrument }) =>
    $wide
      ? css`
          line-height: 24px;
          padding-right: 2px;
          color: #2a82c4;
        `
      : css`
          border: 1px solid ${$instrument ? '#2f7a28' : '#31517c'};
          background: ${$instrument ? '#21661a' : '#233f67'};
          box-shadow: 0 -1px 0 #000, 0 -2px 0 #4a4a4c;
          color: #f2f2f2;
        `}
`;

const Main = styled.main`
  flex: 1;
  min-width: 0;
  display: flex;
  flex-direction: column;
`;

const MenuBar = styled.div`
  ${barStyle}
  ${row}
  height: 22px;
  flex: none;
  padding: 0 13px 0 24px;
  white-space: nowrap;
`;

const Menus = styled.div`
  ${row}
  gap: 19px;
  margin-left: 29px;
`;

const MenuButton = styled.button`
  ${row}
  gap: 8px;
`;

const Caret = styled.span`
  border: solid transparent;
  border-width: 7px 3px 0;
  border-top-color: #444;
`;

const ModeIcons = styled.div`
  ${row}
  gap: 7px;
  margin-left: 22px;

  > :last-child {
    margin-left: 11px;
  }
`;

const ToolPickers = styled.div`
  ${row}
  gap: 16px;
  margin: 0 42px 0 auto;
`;

const PopupLabel = styled.label`
  ${row}
  margin-right: 14px;
  color: #585858;
  text-shadow: 0 1px 0 rgba(255, 255, 255, 0.25);

  > span {
    width: 47px;
  }
  + svg {
    margin: 0 13px 0 6px;
  }
`;

const Popup = styled.select`
  appearance: none;
  width: ${({ $width }) => $width}px;
  color: #2f2f2f;
  outline: none;
`;

const ZoomBox = styled.div`
  display: flex;
  height: 19px;
  border: 1px solid #6b6b6b;
  border-radius: 4px;
  background: rgba(255, 255, 255, 0.06);
`;

const ZoomPart = styled.div`
  ${row}
  justify-content: space-between;
  width: 75px;
  padding: 0 4px 0 6px;

  + & {
    border-left: 1px solid #6b6b6b;
    padding-left: 3px;
  }
`;

const ZoomSlider = styled.input`
  appearance: none;
  width: 50px;
  height: 12px;
  background: linear-gradient(#5c5c5c, #777) center / 100% 4px no-repeat;
  border-radius: 2px;

  &::-webkit-slider-thumb {
    appearance: none;
    width: 10px;
    height: 12px;
    background: linear-gradient(90deg, #333 45%, #8a8a8a 45% 55%, #333 55%);
    clip-path: polygon(50% 0, 100% 40%, 100% 100%, 0 100%, 0 40%);
  }
`;

const Arrange = styled.div`
  position: relative;
  flex: 1;
  min-height: 0;
  display: grid;
  grid-template-columns: 226px 1fr;
  grid-template-rows: 36px 1fr;
  margin: 4px 1px 12px 0;
  border-bottom: 1px solid #000;
  overflow: hidden;
`;

const TrackTools = styled.div`
  ${row}
  gap: 9px;
  padding: 0 13px 2px;
  border-right: 1px solid #000;
  border-bottom: 1px solid #000;
  background: #202022;
`;

const RoundButton = styled.button`
  display: grid;
  place-items: center;
  width: 32px;
  height: 21px;
  border: 1px solid #060606;
  border-radius: 5px;
  background: linear-gradient(#29292b, #1e1e20);
  ${({ $end }) => $end && 'margin-left: auto;'}
`;

const Ruler = styled.div`
  display: flex;
  overflow: hidden;
  border-bottom: 1px solid #000;
  background: linear-gradient(transparent 17px, #000 17px 18px, #202022 18px),
    repeating-linear-gradient(135deg, #1c1c1c 0 5px, #232323 5px 10px);
`;

const RulerStart = styled.div`
  width: 9px;
  flex: none;
  background: repeating-conic-gradient(#101010 0 25%, #323232 0 50%) 0 0 / 2px 2px;
`;

const RulerBar = styled.div`
  width: 48px;
  flex: none;
  border-left: 1px solid #5b5b5b;
  background: ${({ $cycle }) => ($cycle ? 'linear-gradient(#2a84c4, #2a84c4) 0 0 / 100% 17px no-repeat,' : '')}
    repeating-linear-gradient(90deg, transparent 0 11px, #4b4b4b 11px 12px) 0 100% / 100% 6px no-repeat;
  font-size: 12px;
  line-height: 17px;
  color: ${({ $cycle }) => ($cycle ? '#0e2438' : '#a8a8a8')};

  span {
    padding-left: 3px;
  }
`;

const TrackList = styled.div`
  min-height: 0;
  padding-top: 1px;
  overflow: hidden;
  border-right: 1px solid #000;
  background: #212123;
`;

const TrackRow = styled.div`
  ${row}
  height: 63px;
  padding-right: 8px;
  border-top: 1px solid #313133;
  border-bottom: 1px solid #050505;
`;

const TrackNumber = styled.span`
  width: 22px;
  height: 100%;
  border-right: 1px solid #3a3a3c;
  font-size: 13px;
  line-height: 63px;
  text-align: center;
  color: #a0a0a0;
`;

const TrackIcon = styled.span`
  display: grid;
  place-items: center;
  width: 27px;
  height: 13px;
  margin: 2px 11px 0 10px;
  border: 1px solid #0b1120;
  background: linear-gradient(#33486e, #16233f 50%);
`;

const TrackInfo = styled.div`
  flex: 1;
`;

const TrackName = styled.div`
  font-size: 13px;
  line-height: 14px;
  color: #b4b4b4;
`;

const TrackButtons = styled.div`
  display: flex;
  gap: 7px;
  width: 88px;
  margin-top: 7px;
`;

const TrackButton = styled.button`
  flex: 1;
  height: 17px;
  border: 1px solid #151516;
  border-radius: 2px;
  background: linear-gradient(#3c3c3e, #2e2e30);
  font-size: 12px;
  font-weight: 700;
  line-height: 15px;
  color: #989898;
`;

const Canvas = styled.div`
  background: repeating-linear-gradient(90deg, #a3a8a8 0 1px, transparent 1px 48px) 9px 0 no-repeat,
    linear-gradient(transparent 62px, #a5a49b 62px) 0 1px / 100% 63px,
    #c1c0b7;
`;

// runs over both the ruler and the canvas
const Playhead = styled.div`
  position: absolute;
  top: 22px;
  bottom: 0;
  left: 299px;
  width: 15px;
  background: linear-gradient(#1a1a1a, #1a1a1a) center / 1px 100% no-repeat;
`;

const ScopeButton = styled.button`
  color: ${({ $blue }) => ($blue ? '#1f73b8' : '#2b2b2b')};
`;

const Scopes = styled.div`
  ${row}
  gap: 22px;
  margin-left: auto;
`;

const Filters = styled(Scopes)`
  gap: 23px;
  margin-left: 40px;
`;

const WidthButtons = styled(Scopes)`
  gap: 19px;
  margin: 0 10px 0 30px;
`;

const Mixer = styled.div`
  display: flex;
  margin: 4px 1px 0 0;
  overflow: hidden;
  flex: none;
`;

const MixerLabels = styled.div`
  display: grid;
  grid-template-rows: 20px 28px 40px 28px;
  align-items: center;
  width: 91px;
  flex: none;
  padding-right: 5px;
  border-right: 1px solid #2477b8;
  font-size: 11px;
  line-height: 14px;
  text-align: right;
  color: #b0b0b0;
`;
